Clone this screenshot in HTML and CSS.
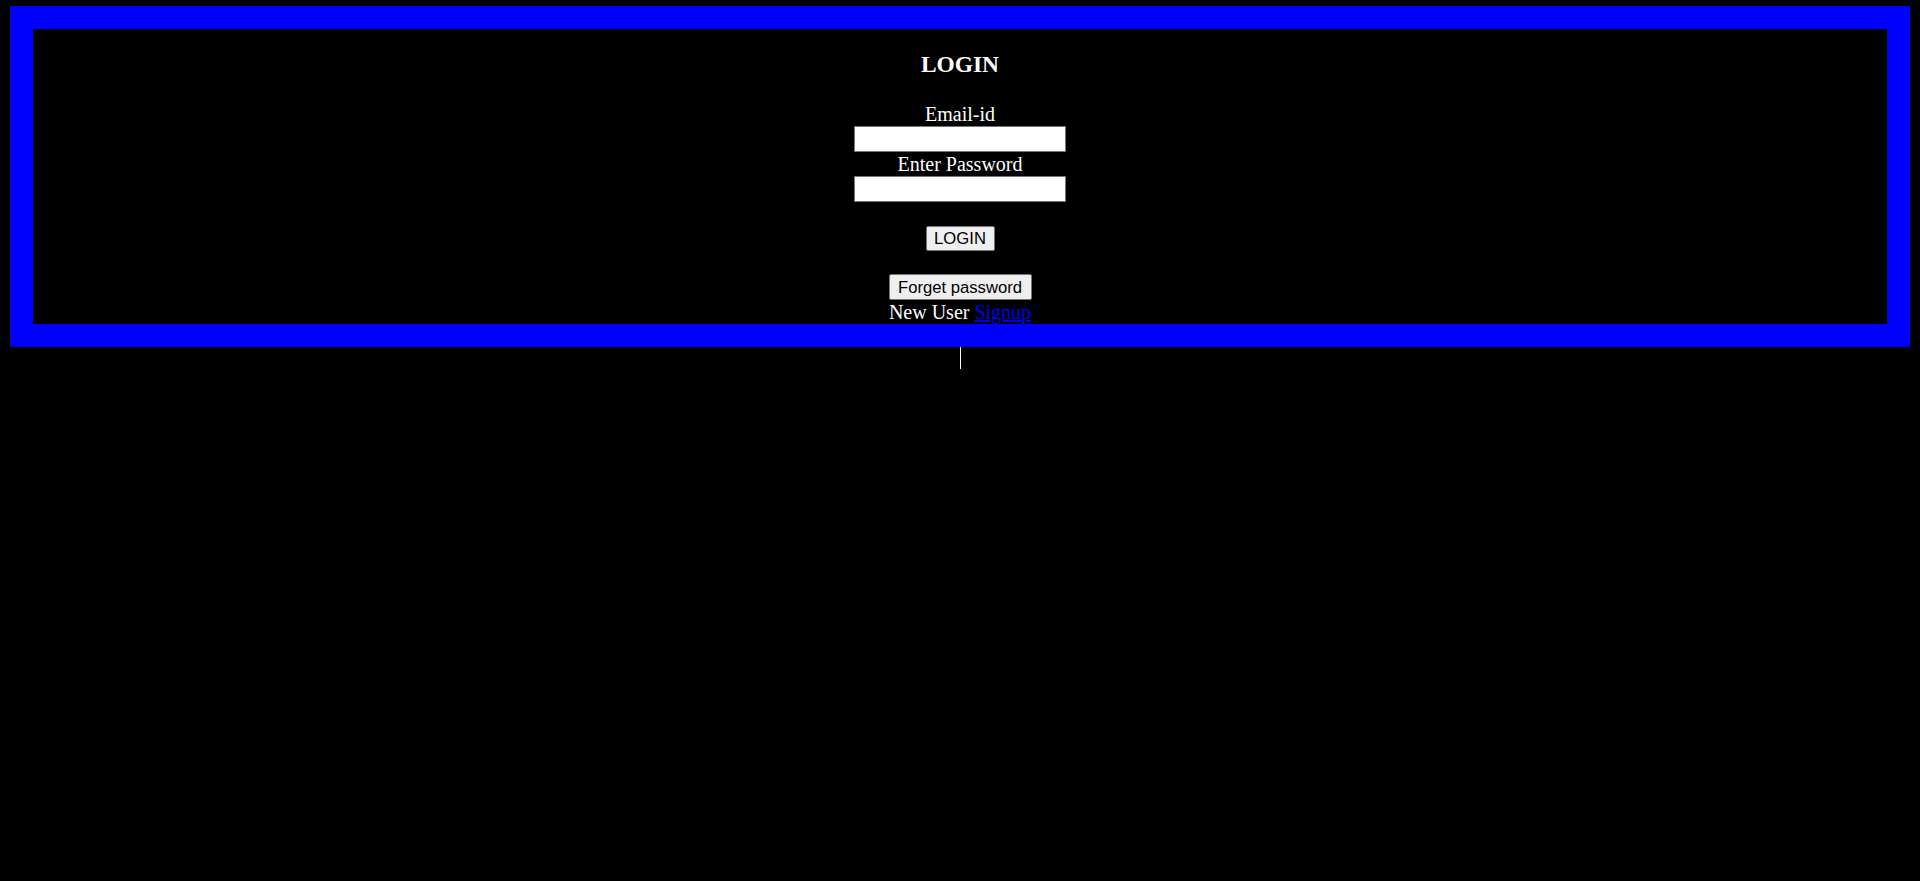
FILE: index.html
```html
<!DOCTYPE html>
<html>
<head>
<meta charset="utf-8">
<title>Login</title>
<link rel="stylesheet" href="styles.css">
</head>
<body>
<div class="box">
  <h3 class="title">LOGIN</h3>
  <div class="label">Email-id</div>
  <input class="field" type="text">
  <div class="label">Enter Password</div>
  <input class="field" type="password">
  <button class="btn btn-login">LOGIN</button>
  <button class="btn btn-forget">Forget password</button>
  <div class="label">New User <a class="link" href="#">Signup</a></div>
</div>
<div class="rule"></div>
</body>
</html>
```
FILE: styles.css
```css
html, body {
  margin: 0;
  padding: 0;
  background: #000;
}
body {
  color: #fff;
  font-family: "Liberation Serif", "Times New Roman", serif;
  min-height: 881px;
}
.box {
  margin: 6px 10px 0;
  border: 23px solid #0000ff;
  text-align: center;
  height: 295px;
  box-sizing: content-box;
  display: flex;
  flex-direction: column;
  align-items: center;
}
.title {
  font-size: 23.4px;
  font-weight: bold;
  line-height: 27px;
  margin: 22px 0 24px;
}
.label {
  font-size: 20px;
  line-height: 24px;
  white-space: nowrap;
}
.field {
  display: block;
  width: 212px;
  height: 26px;
  box-sizing: border-box;
  margin: 0;
  border: 1px solid #767676;
  background: #fff;
  padding: 0 2px;
}
.btn {
  display: block;
  font-family: "Liberation Sans", Arial, sans-serif;
  font-size: 16.67px;
  line-height: 19px;
  color: #000;
  background: #efefef;
  border: 1px solid #767676;
  border-radius: 2px;
  box-sizing: border-box;
  padding: 0;
  margin: 0;
}
.btn-login {
  width: 69px;
  height: 25px;
  margin-top: 24px;
}
.btn-forget {
  width: 143px;
  height: 26px;
  margin-top: 23px;
}
.link {
  color: #0000ee;
  text-decoration: underline;
}
.rule {
  width: 1px;
  height: 22px;
  background: #fff;
  margin: 0 auto;
}
```
